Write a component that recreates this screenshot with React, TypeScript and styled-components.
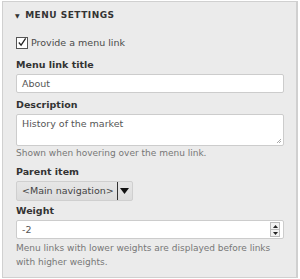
import React, {FC} from 'react';
import styled, {createGlobalStyle} from 'styled-components';

const GlobalStyle = createGlobalStyle`
  html, body {
    margin: 0;
    padding: 0;
    background: #fff;
  }
  body {
    font-family: "DejaVu Sans", Verdana, sans-serif;
    color: #333;
  }
`;

const App: FC = () => {
    return (
        <>
            <GlobalStyle/>
            <Panel>
                <Summary>
                    <Caret>▼</Caret>
                    Menu settings
                </Summary>
                <Body>
                    <CheckRow>
                        <Check>
                            <svg width="11" height="11" viewBox="0 0 11 11">
                                <path d="M2 5.5 L4.5 8.5 L9.5 1" fill="none" stroke="#222" strokeWidth="1.4"/>
                            </svg>
                        </Check>
                        Provide a menu link
                    </CheckRow>

                    <Field $mt={10}>
                        <Label>Menu link title</Label>
                        <TextInput>About</TextInput>
                    </Field>

                    <Field $mt={6}>
                        <Label>Description</Label>
                        <TextArea>
                            History of the market
                            <Grip>
                                <svg width="6" height="6" viewBox="0 0 6 6">
                                    <path d="M5 1 L1 5 M5 3 L3 5" stroke="#aaa" strokeWidth="1"/>
                                </svg>
                            </Grip>
                        </TextArea>
                        <Help>Shown when hovering over the menu link.</Help>
                    </Field>

                    <Field $mt={7}>
                        <Label>Parent item</Label>
                        <Select>
                            <SelectText>&lt;Main navigation&gt;</SelectText>
                            <SelectArrow>
                                <svg width="9" height="6" viewBox="0 0 9 6">
                                    <path d="M0 0 H9 L4.5 6 Z" fill="#111"/>
                                </svg>
                            </SelectArrow>
                        </Select>
                    </Field>

                    <Field $mt={4}>
                        <Label>Weight</Label>
                        <NumberInput>
                            <NumberValue>-2</NumberValue>
                            <Spinner>
                                <SpinBtn $up>
                                    <svg width="5" height="3" viewBox="0 0 5 3"><path d="M0 3 L2.5 0 L5 3 Z" fill="#222"/></svg>
                                </SpinBtn>
                                <SpinBtn>
                                    <svg width="5" height="3" viewBox="0 0 5 3"><path d="M0 0 L5 0 L2.5 3 Z" fill="#222"/></svg>
                                </SpinBtn>
                            </Spinner>
                        </NumberInput>
                        <Help $lines>Menu links with lower weights are displayed before links with higher weights.</Help>
                    </Field>
                </Body>
            </Panel>
        </>
    );
};

export default App;


const Panel = styled.div`
  box-sizing: border-box;
  width: 296px;
  height: 277px;
  margin: 1px 0 0 2px;
  background: #ebebeb;
  border: 1px solid #d0d0d0;
  border-right-width: 2px;
`;
const Summary = styled.div`
  display: flex;
  align-items: center;
  padding: 7px 0 0 12px;
  height: 12px;
  font-size: 9px;
  font-weight: bold;
  letter-spacing: 0.5px;
  text-transform: uppercase;
  color: #333;
`;
const Caret = styled.span`
  font-size: 6px;
  margin-right: 5px;
  color: #333;
`;
const Body = styled.div`
  display: flex;
  flex-direction: column;
  padding: 15px 12px 0 13px;
`;
const CheckRow = styled.div`
  display: flex;
  align-items: center;
  gap: 3px;
  font-size: 9.5px;
  color: #4a4a4a;
  height: 13px;
`;
const Check = styled.span`
  box-sizing: border-box;
  width: 12px;
  height: 12px;
  border: 1px solid #555;
  background: #fff;
  display: flex;
  align-items: center;
  justify-content: center;
`;
const Field = styled.div<{ $mt: number }>`
  display: flex;
  flex-direction: column;
  margin-top: ${p => p.$mt}px;
`;
const Label = styled.div`
  font-size: 9.5px;
  font-weight: bold;
  color: #333;
  margin-bottom: 3px;
  line-height: 12px;
`;
const TextInput = styled.div`
  box-sizing: border-box;
  height: 19px;
  width: 268px;
  border: 1px solid #ccc;
  border-radius: 2px;
  background: #fff;
  padding: 0 5px;
  font-size: 9.5px;
  line-height: 17px;
  color: #555;
`;
const TextArea = styled.div`
  position: relative;
  box-sizing: border-box;
  height: 32px;
  width: 268px;
  border: 1px solid #ccc;
  border-radius: 2px;
  background: #fff;
  padding: 2px 5px;
  font-size: 9.5px;
  line-height: 14px;
  color: #555;
`;
const Grip = styled.span`
  position: absolute;
  right: 1px;
  bottom: 1px;
  display: flex;
`;
const Help = styled.div<{ $lines?: boolean }>`
  margin-top: ${p => p.$lines ? '2px' : '1px'};
  font-size: 9px;
  line-height: ${p => p.$lines ? '14px' : '12px'};
  color: #777;
`;
const Select = styled.div`
  box-sizing: border-box;
  display: flex;
  align-items: stretch;
  align-self: flex-start;
  height: 20px;
  border: 1px solid #cfcfcf;
  border-radius: 2px;
  background: linear-gradient(#e6e6e6, #dcdcdc);
`;
const SelectText = styled.span`
  padding: 0 3px 0 5px;
  font-size: 9.5px;
  line-height: 18px;
  white-space: nowrap;
  color: #444;
`;
const SelectArrow = styled.span`
  display: flex;
  align-items: center;
  justify-content: center;
  width: 14px;
  border-left: 1px solid #333;
`;
const NumberInput = styled.div`
  box-sizing: border-box;
  display: flex;
  align-items: stretch;
  height: 19px;
  width: 268px;
  border: 1px solid #ccc;
  border-radius: 2px;
  background: #fff;
`;
const NumberValue = styled.span`
  flex: 1;
  padding: 0 5px;
  font-size: 9.5px;
  line-height: 17px;
  color: #555;
`;
const Spinner = styled.span`
  display: flex;
  flex-direction: column;
  width: 10px;
  margin: 1px 3px 1px 0;
`;
const SpinBtn = styled.span<{ $up?: boolean }>`
  flex: 1;
  display: flex;
  align-items: center;
  justify-content: center;
  background: #f2f2f2;
  border: 1px solid #bbb;
  border-top-width: ${p => p.$up ? '1px' : '0'};
`;
